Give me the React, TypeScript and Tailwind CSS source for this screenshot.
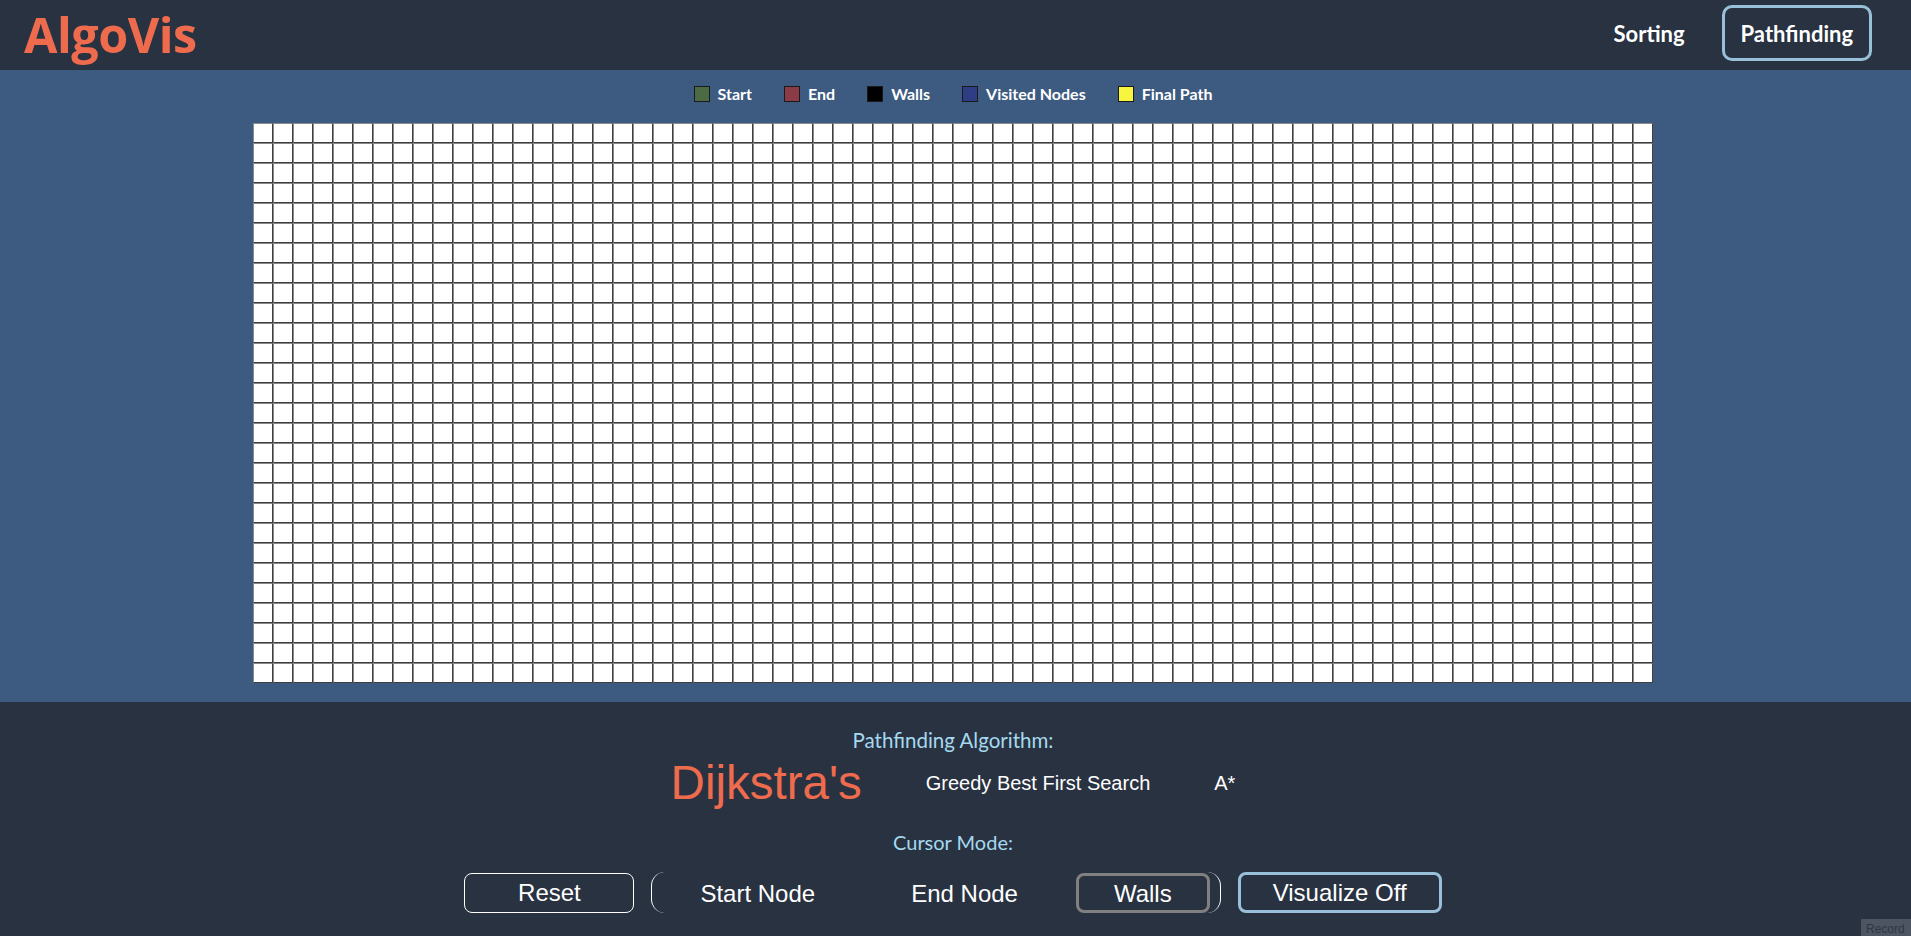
import React from "react"

const ROWS = 28
const COLS = 70

const legend = [
  { label: "Start", color: "bg-[#4b6b45]" },
  { label: "End", color: "bg-[#8a3b45]" },
  { label: "Walls", color: "bg-black" },
  { label: "Visited Nodes", color: "bg-[#2f3d85]" },
  { label: "Final Path", color: "bg-[#f7f540]" },
]

function Grid() {
  const cells = []
  for (let i = 0; i < ROWS * COLS; i++) {
    cells.push(
      <div
        key={i}
        className="h-5 w-5 bg-white border border-[#8a8a8a] border-r-[#3e3e3e] border-b-[#3e3e3e]"
      />
    )
  }
  return <div className="grid grid-cols-[repeat(70,20px)]">{cells}</div>
}

export default function App() {
  return (
    <div className="min-h-[936px] w-full flex flex-col bg-[#293241] font-['Lato','Liberation_Sans',sans-serif]">
      {/* Header */}
      <div className="h-[70px] flex items-center justify-between pl-[24px] pr-[39px] bg-[#293241]">
        <h1 className="text-[48.5px] font-bold text-[#ee6c4d] leading-none -mt-[2px] font-['Open_Sans','Lato',sans-serif] tracking-[-0.5px]">
          AlgoVis
        </h1>
        <div className="flex items-center gap-[18px] mb-[4px]">
          <button className="px-4 h-[56px] border-[3px] border-transparent rounded-[10px] text-white text-[22px] font-bold">
            Sorting
          </button>
          <button className="px-4 h-[56px] border-[3px] border-[#98c1d9] rounded-[10px] text-white text-[22px] font-bold">
            Pathfinding
          </button>
        </div>
      </div>

      {/* Board */}
      <div className="bg-[#3d5a80] pt-[14px] pb-[19px] pr-[5px] flex flex-col items-center">
        <div className="h-5 flex items-center gap-[32px]">
          {legend.map((l) => (
            <div key={l.label} className="flex items-center gap-[8px]">
              <span className={`h-4 w-4 border border-[#1a1a1a] ${l.color}`} />
              <span className="text-white text-[16px] font-bold">{l.label}</span>
            </div>
          ))}
        </div>
        <div className="mt-[19px]">
          <Grid />
        </div>
      </div>

      {/* Controls */}
      <div className="flex-1 flex flex-col items-center pt-[26px] pr-[5px] pb-[23px]">
        <div className="h-6 leading-6 text-[20.5px] text-[#a5d9ef]">Pathfinding Algorithm:</div>
        <div className="mt-[3px] flex items-center gap-[64px] font-['Liberation_Sans',Arial,sans-serif]">
          <button className="h-[56px] text-[47.5px] leading-[56px] text-[#ee6c4d]">Dijkstra's</button>
          <button className="text-[20px] text-white">Greedy Best First Search</button>
          <button className="text-[20px] text-white">A*</button>
        </div>
        <div className="mt-[19px] h-6 leading-6 text-[20px] text-[#a5d9ef]">Cursor Mode:</div>
        <div className="mt-[18px] flex items-center gap-[17px] font-['Liberation_Sans',Arial,sans-serif] text-[24px] text-white">
          <button className="w-[170px] h-[40px] border border-white rounded-[8px]">Reset</button>
          <div className="flex items-center gap-[20px] px-[10px] h-[41px] border-x-[1.5px] border-white rounded-[14px]">
            <button className="px-[35px] h-[40px] border-[3px] border-transparent rounded-[8px]">Start Node</button>
            <button className="px-[35px] h-[40px] border-[3px] border-transparent rounded-[8px]">End Node</button>
            <button className="px-[35px] h-[40px] border-[3px] border-[#808080] rounded-[8px]">Walls</button>
          </div>
          <button className="px-[32px] h-[41px] border-[3px] border-[#98c1d9] rounded-[8px]">Visualize Off</button>
        </div>
      </div>

      <div className="fixed bottom-0 right-0 w-[50px] h-[17px] overflow-hidden bg-[#4d5563] pl-[5px] text-[12px] leading-[20px] text-[#2f3745] font-['Liberation_Sans',sans-serif]">
        Record
      </div>
    </div>
  )
}
